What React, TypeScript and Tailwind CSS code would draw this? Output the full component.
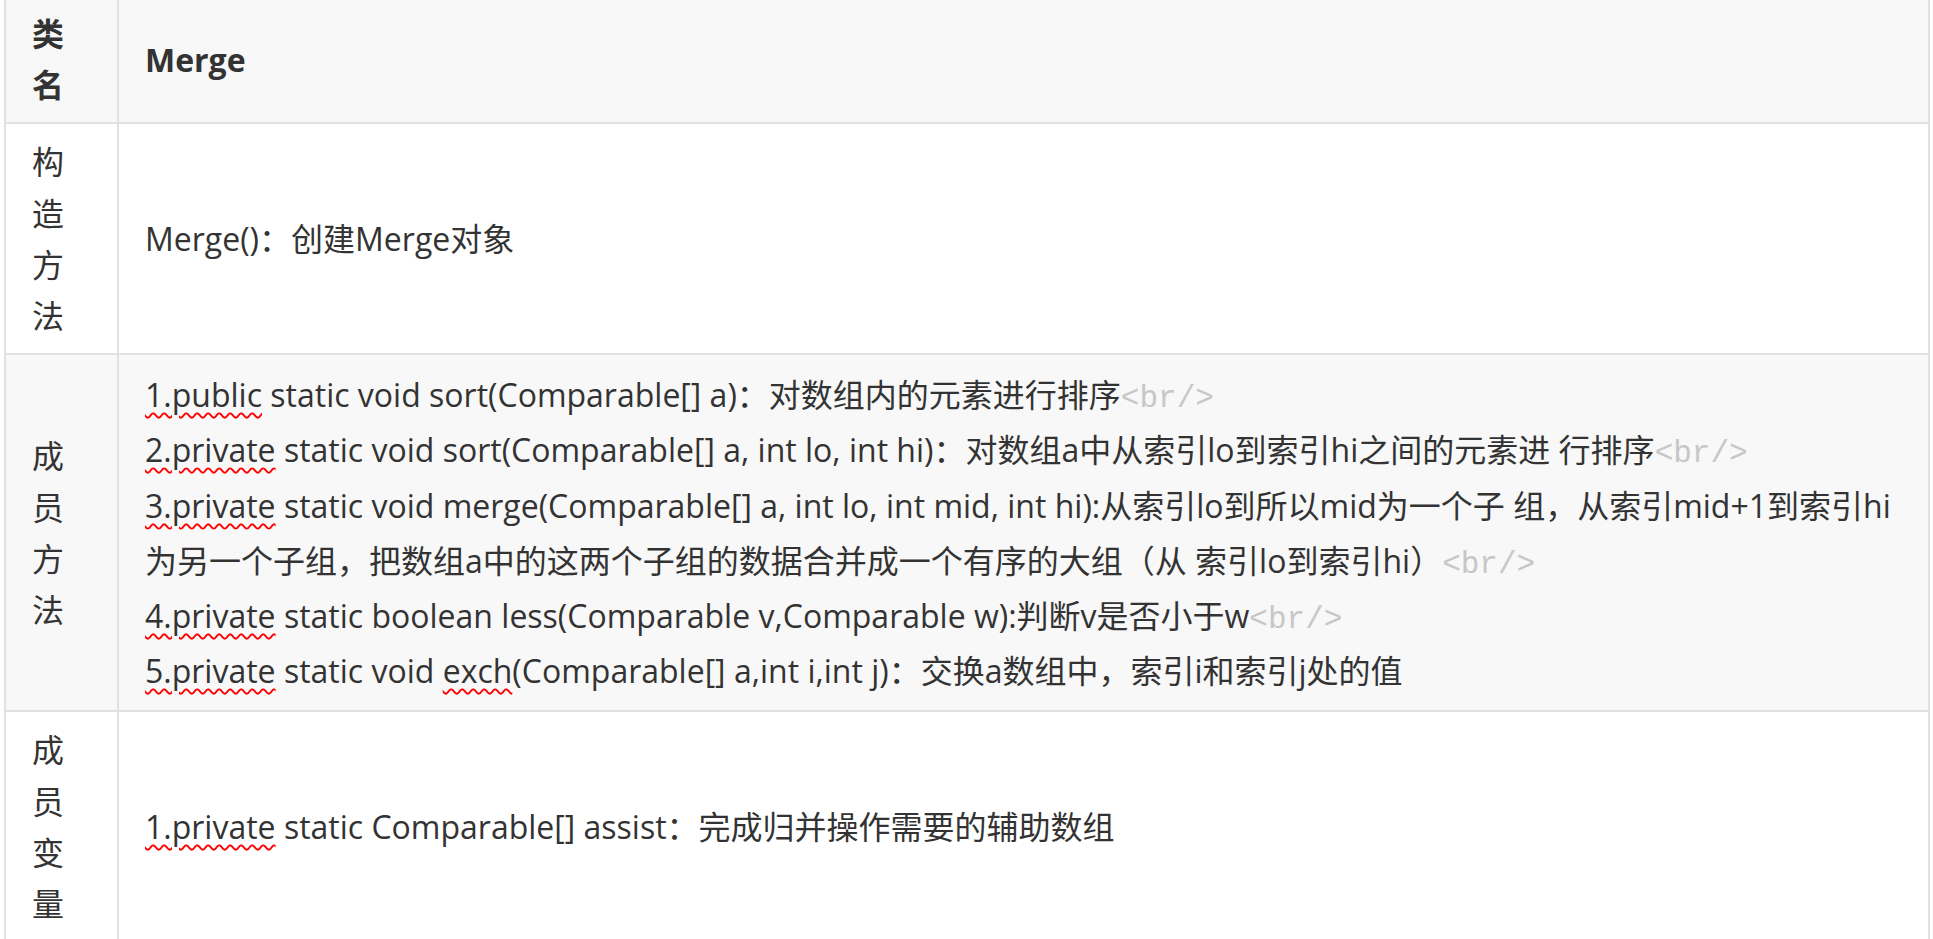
import React from 'react';

const sans = "font-['Open_Sans','Noto_Sans_CJK_SC',sans-serif]";

// spell-check style squiggle
function Sq({ children }: { children: React.ReactNode }) {
  return (
    <span className="underline decoration-wavy decoration-[#ff0000] decoration-[1.5px] underline-offset-[5px]">
      {children}
    </span>
  );
}

function Br() {
  return (
    <span className="font-['Liberation_Mono',monospace] text-[31px] leading-none text-[#c7c7c7]">{'<br/>'}</span>
  );
}

function Line({ children }: { children: React.ReactNode }) {
  return <div className="h-[55.2px] leading-[55.2px] whitespace-nowrap">{children}</div>;
}

function Row({
  label,
  shaded,
  bold,
  children,
}: {
  label: string[];
  shaded?: boolean;
  bold?: boolean;
  children: React.ReactNode;
}) {
  return (
    <div className={`flex border-b-2 border-[#dfe2e5] ${shaded ? 'bg-[#f8f8f8]' : 'bg-white'}`}>
      <div
        className={`w-[113px] shrink-0 border-r-2 border-[#dfe2e5] px-[26px] py-[12px] flex flex-col justify-center leading-[51.2px] ${bold ? 'font-bold' : ''}`}
      >
        {label.map((c) => (
          <div key={c}>{c}</div>
        ))}
      </div>
      <div className={`flex-1 px-[26px] py-[12px] flex flex-col justify-center ${bold ? 'font-bold' : ''}`}>
        {children}
      </div>
    </div>
  );
}

export default function App() {
  return (
    <div className={`min-h-screen bg-white text-[32px] text-[#333333] overflow-hidden ${sans}`}>
      <div className="ml-[4px] mr-[3px] -mt-[4px] border-l-2 border-r-2 border-[#dfe2e5]">
        <Row label={['类', '名']} shaded bold>
          <div className="leading-[51.2px]">Merge</div>
        </Row>

        <Row label={['构', '造', '方', '法']}>
          <div className="leading-[51.2px]">Merge()：创建Merge对象</div>
        </Row>

        <Row label={['成', '员', '方', '法']} shaded>
          <Line>
            <Sq>1.public</Sq> static void sort(Comparable[] a)：对数组内的元素进行排序<Br />
          </Line>
          <Line>
            <Sq>2.private</Sq> static void sort(Comparable[] a, int lo, int hi)：对数组a中从索引lo到索引hi之间的元素进 行排序
            <Br />
          </Line>
          <Line>
            <Sq>3.private</Sq> static void merge(Comparable[] a, int lo, int mid, int hi):从索引lo到所以mid为一个子 组，从索引mid+1到索引hi
          </Line>
          <Line>
            为另一个子组，把数组a中的这两个子组的数据合并成一个有序的大组（从 索引lo到索引hi）<Br />
          </Line>
          <Line>
            <Sq>4.private</Sq> static boolean less(Comparable v,Comparable w):判断v是否小于w<Br />
          </Line>
          <Line>
            <Sq>5.private</Sq> static void <Sq>exch</Sq>(Comparable[] a,int i,int j)：交换a数组中，索引i和索引j处的值
          </Line>
        </Row>

        <Row label={['成', '员', '变', '量']}>
          <div className="leading-[51.2px]">
            <Sq>1.private</Sq> static Comparable[] assist：完成归并操作需要的辅助数组
          </div>
        </Row>
      </div>
    </div>
  );
}
